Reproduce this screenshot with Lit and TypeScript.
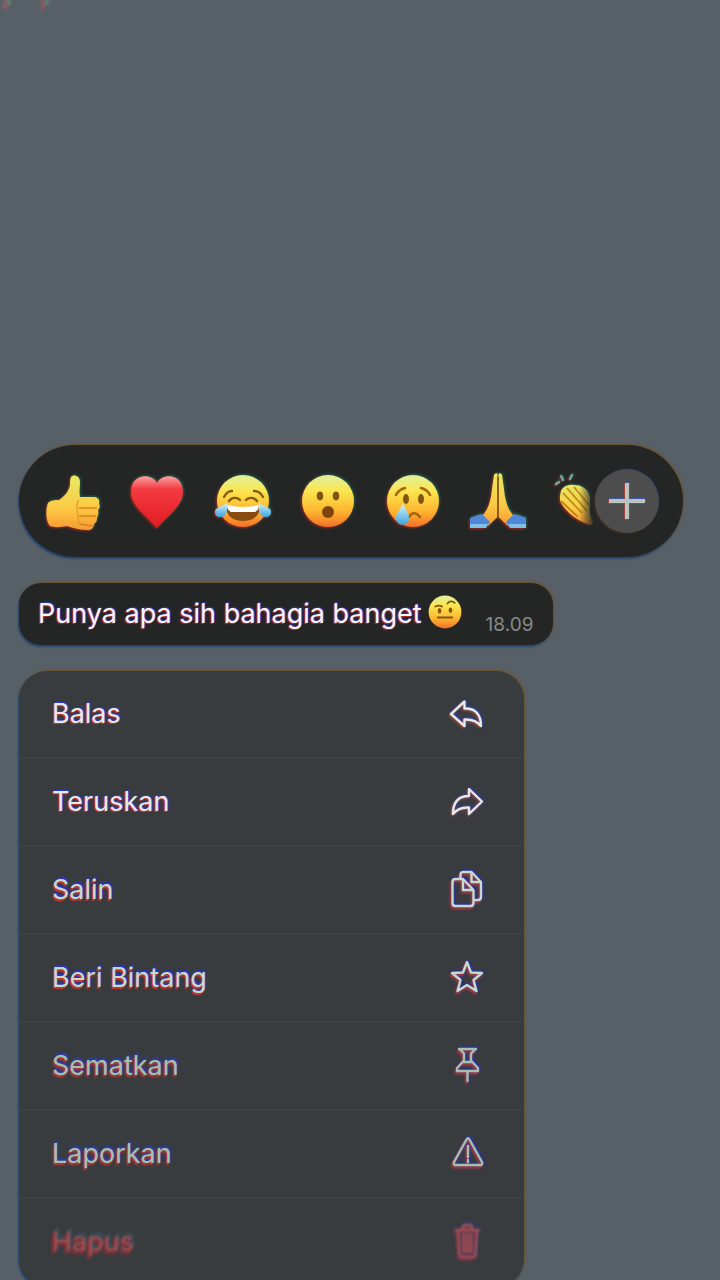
import { LitElement, html, svg, css } from "lit";
import { customElement } from "lit/decorators.js";

const gradients = svg`
  <defs>
    <linearGradient id="face" x1="0" y1="0" x2="0" y2="1">
      <stop offset="0" stop-color="#dff0a0" />
      <stop offset="0.3" stop-color="#fbe650" />
      <stop offset="0.7" stop-color="#fdb52e" />
      <stop offset="1" stop-color="#f2702a" />
    </linearGradient>
    <linearGradient id="heart" x1="0" y1="0" x2="0" y2="1">
      <stop offset="0" stop-color="#f9a0a0" />
      <stop offset="0.25" stop-color="#f33a41" />
      <stop offset="1" stop-color="#e01c22" />
    </linearGradient>
    <linearGradient id="hand" x1="0" y1="0" x2="0" y2="1">
      <stop offset="0" stop-color="#e6ea62" />
      <stop offset="0.6" stop-color="#fcca44" />
      <stop offset="1" stop-color="#f59a32" />
    </linearGradient>
    <linearGradient id="tear" x1="0" y1="0" x2="0" y2="1">
      <stop offset="0" stop-color="#d9f2fb" />
      <stop offset="1" stop-color="#3ba5e0" />
    </linearGradient>
  </defs>
`;

const emoji = {
  thumb: svg`
    <path fill="url(#hand)" d="M26 4c3-3 9-1 9 5 0 6-1 9 0 15h13c5 0 7 3 6 6 1 3 1 5-1 7 1 3 0 6-1 8 0 3-1 5-3 6 0 4-3 6-6 6-8 0-15-2-21-4-6 1-12 2-17 0C0 47 1 35 3 30c3-3 7-3 11-3 6-4 10-9 11-15 0-3 0-6 1-8z" />
    <path fill="none" stroke="#d9821e" stroke-width="1.6" d="M34 35h18M34 43h17M34 51l14 2" />
    <path fill="none" stroke="#e8a02c" stroke-width="1.6" d="M34 27q-3 3-2 8 1 10 2 17" />`,
  heart: svg`
    <path fill="url(#heart)" d="M27 10C32 0 53 0 53 19c0 14-16 24-26 36C17 43 1 33 1 19 1 0 22 0 27 10z" />`,
  joy: svg`
    <circle cx="28" cy="28" r="26" fill="url(#face)" />
    <path fill="none" stroke="#8a5a14" stroke-width="2.4" stroke-linecap="round" d="M9 24c2-4 5-6 8-6M39 18c4 0 7 2 9 6M14 28c3-4 8-4 11-1M31 27c3-3 8-3 11 1" />
    <path fill="#8a4b10" d="M11 33q17 4 34 0c0 10-7 15-17 15s-17-5-17-15z" />
    <path fill="#fff" d="M12 32q16 4 32 0c0 4-2 6-4 7H16c-2-1-4-3-4-7z" />
    <path fill="url(#tear)" d="M12 30c1 6 0 14-7 14-3 0-5-2-5-5 0-5 7-5 12-9zM44 30c-1 6 0 14 7 14 3 0 5-2 5-5 0-5-7-5-12-9z" />`,
  wow: svg`
    <circle cx="28" cy="28" r="26" fill="url(#face)" />
    <ellipse cx="20" cy="23" rx="3.2" ry="4.4" fill="#80550f" />
    <ellipse cx="36" cy="23" rx="3.2" ry="4.4" fill="#80550f" />
    <ellipse cx="28" cy="39" rx="6" ry="6" fill="#80450f" />`,
  sad: svg`
    <circle cx="28" cy="28" r="26" fill="url(#face)" />
    <path fill="none" stroke="#a8660f" stroke-width="2.6" stroke-linecap="round" d="M11 22c2-4 5-6 9-7M36 15c4 1 7 3 9 7M24 44c3-5 7-5 11 0" />
    <ellipse cx="21" cy="26" rx="3" ry="5" fill="#80550f" />
    <ellipse cx="36" cy="26" rx="3" ry="5" fill="#80550f" />
    <path fill="url(#tear)" d="M18 31c3 5 6 10 6 14 0 9-13 9-13 0 0-4 4-9 7-14z" />`,
  pray: svg`
    <path fill="url(#hand)" d="M27.5 1v43L18 53l-8-8c8-7 11-17 12-29l2-14c1-2 3-2 3.500-1z" />
    <path fill="url(#hand)" d="M28.500 1v43L38 53l8-8c-8-7-11-17-12-29L32 2c-1-2-3-2-3.500-1z" />
    <path stroke="#8b5410" stroke-width="1.6" d="M28 4v40" />
    <path fill="#4f86d8" d="M12 41l8 8-4 6H0V45c4-2 8-3 12-4zM44 41l-8 8 4 6h16V45c-4-2-8-3-12-4z" />
    <path fill="#7fbfe8" d="M0 51h18l-2 4H0zM38 51h18v4H40z" />`,
  clap: svg`
    <path fill="url(#hand)" d="M6 18c2-5 8-7 13-6 7 0 14 3 16 12 0 10-2 18 3 24l-1 4-4-1C23 48 12 40 6 30c-2-4-1-8 0-12z" />
    <path fill="none" stroke="#bf861c" stroke-width="1.8" d="M8 20l19 20M12 15l20 23M19 14l15 18M6 28l17 16" />
    <path stroke="#7aa4a6" stroke-width="2.4" stroke-linecap="round" d="M1 11l3-2M6 3l2 4M17 2l-2 4" />`,
  raised: svg`
    <circle cx="28" cy="28" r="27" fill="url(#face)" />
    <path fill="none" stroke="#80550f" stroke-width="3" stroke-linecap="round" d="M12 19c4-2 8-2 11 0M32 14c3-4 8-5 12-1M16 37h24" />
    <ellipse cx="19" cy="26" rx="3" ry="4.500" fill="#80550f" />
    <ellipse cx="37" cy="25" rx="3" ry="4.500" fill="#80550f" />`,
};

const drawEmoji = (art: unknown, name: string, cls = "emoji") => html`
  <svg class=${cls} viewBox="0 0 56 56" role="img" aria-label=${name}>${gradients}${art}</svg>
`;

const reactions = [
  { name: "Jempol", art: emoji.thumb },
  { name: "Hati", art: emoji.heart },
  { name: "Tertawa", art: emoji.joy },
  { name: "Kaget", art: emoji.wow },
  { name: "Sedih", art: emoji.sad },
  { name: "Terima kasih", art: emoji.pray },
  { name: "Tepuk tangan", art: emoji.clap },
];

const actions = [
  {
    label: "Balas",
    tone: "crisp",
    icon: svg`<path d="M2 18L15.500 5.500v7C26 12 32 18 32 30c-4-5-9-7-16.500-6.500v6.500z" />`,
  },
  {
    label: "Teruskan",
    tone: "crisp",
    icon: svg`<path d="M33 17.500L20 5v7C9 12 4 18 4 30c4-5 9-7 16-6.500V30z" />`,
  },
  {
    label: "Salin",
    tone: "fringed",
    icon: svg`
      <path d="M11.500 7V3q0-3 3-3h8l9.500 10v15q0 3-3 3h-4M22.500 0v10H32" />
      <path d="M6.500 7H14l10.500 11v13q0 3-3 3h-15q-3 0-3-3V10q0-3 3-3zM14 7v11h10.500" />`,
  },
  {
    label: "Beri Bintang",
    tone: "fringed",
    icon: svg`<path d="M18 2l4 10.500 11 .5-8.500 7 3 11L18 25l-9.500 6 3-11L3 13l11-.500z" />`,
  },
  {
    label: "Sematkan",
    tone: "soft",
    icon: svg`<path d="M10 1h17M11 1.500l4 4v7L8 20v3h21v-3l-7-7.500v-7l4-4M15 14h7M18.500 23v10" />`,
  },
  {
    label: "Laporkan",
    tone: "soft",
    icon: svg`<path d="M17.500 3.500q1.500-2.500 3 0L33 26q1 3-2 3H7q-3 0-2-3zM19 10v11M19 24v2" />`,
  },
  {
    label: "Hapus",
    tone: "danger",
    icon: svg`<path d="M7 6h23M14 6V3q0-2 2-2h5q2 0 2 2v3M9 6l1.500 24q0 3 3 3h10q3 0 3-3L28 6M14.500 10l.5 18M18.500 10v18M22.500 10l-.5 18" />`,
  },
];

@customElement("app-root")
export class AppRoot extends LitElement {
  static styles = css`
    :host {
      display: flex;
      flex-direction: column;
      box-sizing: border-box;
      height: 100vh;
      overflow: hidden;
      background: #586067;
      font-family: Inter, "Liberation Sans", sans-serif;
      color: #f4f5f5;
    }
    * {
      box-sizing: border-box;
    }
    button {
      margin: 0;
      padding: 0;
      border: 0;
      background: none;
      color: inherit;
      font: inherit;
      text-align: left;
      cursor: pointer;
    }
    svg {
      display: block;
      flex: none;
      overflow: visible;
    }
    .backdrop {
      flex: none;
      height: 445px;
    }
    .remnant {
      width: 60px;
      height: 14px;
      filter: blur(1px);
    }
    .sheet {
      flex: none;
      display: flex;
      flex-direction: column;
      align-items: flex-start;
      gap: 26px;
      padding: 0 37px 0 19px;
    }
    .surface {
      box-shadow: 1px -1px 2px rgba(120, 76, 16, 0.7), -1px 2px 2px rgba(12, 60, 120, 0.7);
    }
    .reactions {
      display: flex;
      align-items: center;
      width: 100%;
      height: 112px;
      padding: 0 24px 0 26px;
      border-radius: 56px;
      background: #242626;
    }
    .track {
      flex: 1;
      min-width: 0;
      display: flex;
      gap: 29px;
      padding: 8px 0;
      overflow: hidden;
      mask-image: linear-gradient(to right, #000 calc(100% - 16px), transparent);
    }
    .emoji {
      width: 56px;
      height: 56px;
      filter: drop-shadow(-1px 1px 1px rgba(210, 30, 20, 0.7)) drop-shadow(1px -1px 1px rgba(20, 150, 110, 0.5));
    }
    .more {
      flex: none;
      display: grid;
      place-items: center;
      width: 64px;
      height: 64px;
      border-radius: 50%;
      background: #4d4d4e;
      box-shadow: -1px 1px 2px rgba(110, 50, 20, 0.5), 1px -1px 2px rgba(20, 50, 90, 0.6);
    }
    .plus {
      width: 40px;
      height: 40px;
      stroke: #b9c4bf;
      stroke-width: 4;
      filter: drop-shadow(-1px 1px 0 rgba(210, 60, 50, 0.6)) drop-shadow(1px -1px 0 rgba(50, 90, 220, 0.6));
    }
    .bubble {
      display: flex;
      align-items: center;
      height: 62px;
      padding: 0 20px 0 19px;
      border-radius: 22px;
      background: #242626;
    }
    .message {
      margin: 0;
      font-size: 27px;
      line-height: 36px;
      white-space: nowrap;
      text-shadow: -1px 1px 1px rgba(220, 50, 40, 0.8), 1px -1px 1px rgba(40, 60, 230, 0.8);
    }
    .inline-emoji {
      width: 34px;
      height: 34px;
      margin: 0 0 4px 6px;
    }
    .time {
      align-self: flex-end;
      margin-left: 24px;
      padding-bottom: 8px;
      font-size: 19px;
      line-height: 24px;
      color: #858a89;
    }
    .menu {
      width: 76%;
      margin: 0;
      padding: 0;
      list-style: none;
      border-radius: 28px;
      background: #393c3f;
      overflow: hidden;
    }
    .row {
      height: 88px;
      border-bottom: 2px solid #3d4144;
    }
    .row:last-child {
      border-bottom-color: transparent;
    }
    .action {
      display: flex;
      align-items: center;
      justify-content: space-between;
      width: 100%;
      height: 100%;
      padding: 0 39px 0 33px;
      font-size: 27px;
      line-height: 36px;
    }
    .icon {
      width: 36px;
      height: 36px;
      fill: none;
      stroke: currentColor;
      stroke-width: 2.4;
      stroke-linejoin: round;
      stroke-linecap: round;
    }
    .crisp {
      color: #e2ece5;
      text-shadow: -1px 1px 1px rgba(230, 50, 40, 0.9), 1px -1px 1px rgba(40, 60, 230, 0.9);
    }
    .crisp .icon {
      filter: drop-shadow(-1px 1px 1px rgba(210, 80, 40, 0.7)) drop-shadow(1px -1px 1px rgba(40, 60, 220, 0.7));
    }
    .fringed {
      color: #c4dccb;
      text-shadow: -1px 2px 1px rgba(225, 50, 40, 0.9), 1px -2px 1px rgba(40, 50, 220, 0.9);
    }
    .fringed .icon,
    .soft .icon {
      filter: drop-shadow(-1px 2px 1px rgba(220, 60, 40, 0.8)) drop-shadow(1px -1px 1px rgba(30, 40, 220, 0.8));
    }
    .soft {
      color: #a3c2ae;
      text-shadow: -1px 2px 2px rgba(225, 50, 45, 0.9), 1px -2px 2px rgba(40, 60, 210, 0.9);
    }
    .danger {
      color: #a05256;
      text-shadow: -2px 3px 2px rgba(190, 40, 45, 0.8), 2px -3px 2px rgba(60, 90, 110, 0.8);
    }
    .danger .label {
      filter: blur(1px);
    }
    .danger .icon {
      filter: drop-shadow(-1px 2px 1px rgba(200, 50, 55, 0.6)) drop-shadow(1px -2px 1px rgba(40, 60, 140, 0.6)) blur(1px);
    }
  `;

  render() {
    return html`
      <div class="backdrop">
        <svg class="remnant" viewBox="0 0 60 14" aria-hidden="true">
          <path d="M5 0v10M43 0v10" stroke="#8c5a62" stroke-width="4" />
          <path d="M9 0v5M47 0v5" stroke="#5f8a74" stroke-width="3" />
        </svg>
      </div>
      <main class="sheet">
        <div class="reactions surface">
          <div class="track">
            ${reactions.map((r) => html`<button type="button" aria-label=${r.name}>${drawEmoji(r.art, r.name)}</button>`)}
          </div>
          <button class="more" type="button" aria-label="Reaksi lainnya">
            <svg class="plus" viewBox="0 0 40 40"><path d="M20 2v36M2 20h36" /></svg>
          </button>
        </div>
        <article class="bubble surface">
          <p class="message">Punya apa sih bahagia banget</p>
          ${drawEmoji(emoji.raised, "Alis terangkat", "inline-emoji")}
          <time class="time" datetime="18:09">18.09</time>
        </article>
        <ul class="menu surface">
          ${actions.map(
            (a) => html`
              <li class="row">
                <button type="button" class="action ${a.tone}">
                  <span class="label">${a.label}</span>
                  <svg class="icon" viewBox="0 0 36 36" aria-hidden="true">${a.icon}</svg>
                </button>
              </li>
            `
          )}
        </ul>
      </main>
    `;
  }
}
